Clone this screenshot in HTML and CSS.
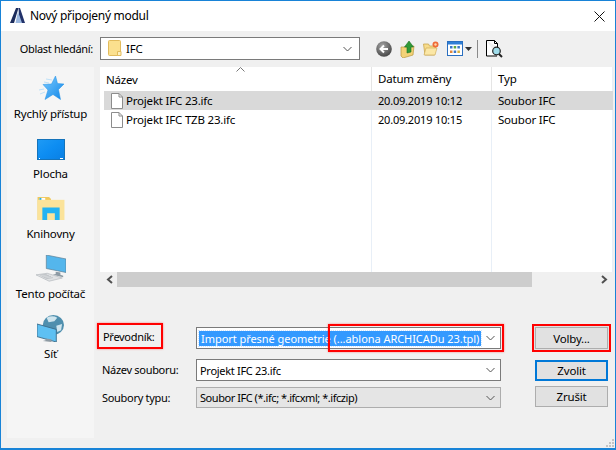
FILE: index.html
```html
<!DOCTYPE html>
<html lang="cs">
<head>
<meta charset="utf-8">
<title>Nový připojený modul</title>
<link rel="stylesheet" href="styles.css">
</head>
<body>
<div class="window">
  <header class="titlebar">
    <svg class="app-logo" width="15" height="15" viewBox="0 0 15 15"><path d="M0 15 6 0h2.500L4 15z" fill="#1c2c5c"/><path d="M8.500 0H10l5 15H9.500z" fill="#22326a"/><path d="M8 3.500 12 15H5.500z" fill="#9db9e0"/></svg>
    <span class="title-text">Nový připojený modul</span>
    <svg class="close" width="11" height="11" viewBox="0 0 11 11"><path d="M.5.500l10 10M10.500.500l-10 10" stroke="#111" stroke-width="1" fill="none"/></svg>
  </header>

  <div class="lookin">
    <label class="lookin-label">Oblast hledání:</label>
    <div class="combo lookin-combo">
      <svg class="folder" width="14" height="17" viewBox="0 0 14 17"><path d="M.5 1.500Q.5.500 1.500.500h10q1 0 1 1v14h-11q-1 0-1-1z" fill="#fbe08e" stroke="#e2bb5c"/><path d="M9.500 11.500h3.500v4h-3.500z" fill="#fdf0bf" stroke="#e2bb5c"/></svg>
      <span class="combo-text">IFC</span>
      <svg class="chev" width="9" height="6" viewBox="0 0 9 6"><path d="M.5 1l4 4 4-4" fill="none" stroke="#555"/></svg>
    </div>
    <div class="tools">
      <svg width="16" height="16" viewBox="0 0 16 16"><defs><radialGradient id="bk" cx=".4" cy=".3" r=".8"><stop offset="0" stop-color="#a5a5a5"/><stop offset="1" stop-color="#3c3c3c"/></radialGradient></defs><circle cx="8" cy="8" r="7.800" fill="url(#bk)"/><path d="M12 8H5M8 4.500 4.500 8 8 11.500" fill="none" stroke="#fff" stroke-width="2"/></svg>
      <svg class="tool-up" width="16" height="18" viewBox="0 0 16 18"><path d="M1 7h5l8-1-1 9-10 3-2-2z" fill="#f3d277" stroke="#b9963f" stroke-width=".7"/><path d="M7 13V7H4.500L9 1l4.500 6H11v5z" fill="#2f9a36" stroke="#1c6e24" stroke-width=".6"/></svg>
      <svg class="tool-new" width="16" height="15" viewBox="0 0 16 15"><path d="M.5 3h5l1 2h6l-1 9H2z" fill="#f7dc8c" stroke="#c9a64f" stroke-width=".8"/><path d="M1 14 3 7h11l-2 7z" fill="#fbe7a6" stroke="#c9a64f" stroke-width=".6"/><circle cx="12.500" cy="3.500" r="3" fill="#ef6a38"/><circle cx="12.500" cy="3.500" r="1.200" fill="#ffd7a8"/></svg>
      <svg class="tool-view" width="25" height="15" viewBox="0 0 25 15"><rect x=".5" y=".5" width="15" height="14" fill="#fff" stroke="#2a6fc0"/><rect x="1" y="1" width="14" height="2.500" fill="#2f7fd6"/><path d="M3 5h2.500v2.500H3z" fill="#3b78c9"/><path d="M6.700 5h2.500v2.500H6.700z" fill="#5aa641"/><path d="M10.400 5h2.500v2.500h-2.500z" fill="#3b78c9"/><path d="M3 9.500h2.500V12H3z" fill="#e2863a"/><path d="M6.700 9.500h2.500V12H6.700z" fill="#3b78c9"/><path d="M10.400 9.500h2.500V12h-2.500z" fill="#d9b13c"/><path d="M18 6h7l-3.500 4z" fill="#333"/></svg>
      <span class="tool-sep"></span>
      <svg width="17" height="18" viewBox="0 0 17 18"><path d="M.5.500h8l3 3V7M11 16H.500V.500" fill="#fff" stroke="#000"/><path d="M8.500.500v3h3" fill="none" stroke="#000"/><circle cx="10.500" cy="11" r="3.800" fill="#9fdcea" stroke="#222" stroke-width="1.200"/><path d="M13 14l3 3" stroke="#222" stroke-width="2"/></svg>
    </div>
  </div>

  <div class="main">
    <nav class="places">
      <div class="place place-star">
        <svg width="26" height="26" viewBox="0 0 26 26"><defs><linearGradient id="st" x1="0" y1="0" x2="1" y2="1"><stop offset="0" stop-color="#7ccbff"/><stop offset="1" stop-color="#0f86e8"/></linearGradient></defs><path d="M8 3l6 1M6 6l5 1M1 14l5-1M2 18l5-2" stroke="#bfe1f8" stroke-width="1" fill="none"/><path d="M17.500 0l2 7.500L26 8 20.500 13.500l2 10-7.500-5L7 23.500l3-9.500-5-5.500 8.500-.5z" fill="url(#st)" stroke="#1c8fe6" stroke-width=".5"/></svg>
        <span>Rychlý přístup</span>
      </div>
      <div class="place">
        <svg width="28" height="21" viewBox="0 0 28 21"><defs><linearGradient id="dk" x1="0" y1="0" x2="1" y2="1"><stop offset="0" stop-color="#1f9bf5"/><stop offset=".5" stop-color="#0d8df2"/><stop offset="1" stop-color="#0a7fe3"/></linearGradient></defs><rect x=".5" y=".5" width="27" height="20" fill="url(#dk)" stroke="#1573ba"/><path d="M2 19.500h1M23 19.500h3" stroke="#fff"/></svg>
        <span>Plocha</span>
      </div>
      <div class="place">
        <svg width="28" height="24" viewBox="0 0 28 25"><path d="M0 1h12l2 2v22H0z" fill="#f0c85c"/><path d="M0 4h28v21H0z" fill="#fbe39a"/><path d="M2 2h6v2H2z" fill="#fff"/><path d="M2 2h2v2H2z" fill="#2ab0e0"/><path d="M5 25V12h18v13h-5v-7h-8v7z" fill="#22b3f2"/></svg>
        <span>Knihovny</span>
      </div>
      <div class="place place-tight">
        <svg width="30" height="27" viewBox="0 0 32 34" preserveAspectRatio="none"><path d="M11 0l21 5v17l-21-5z" fill="#54b6ec" stroke="#5b7e94" stroke-width=".8"/><path d="M21 21v3l-3 1 11 3v-2l-3-1v-3z" fill="#8d9aa3"/><path d="M0 25l12-2 16 6-14 4z" fill="#e0e2e4" stroke="#aeb3b7" stroke-width=".7"/><path d="M4 25.500l8-1.300M6 27l8-1.500M8 28.500l8-1.500M10 30l8-1.500" stroke="#b3b8bc" stroke-width=".8"/></svg>
        <span>Tento počítač</span>
      </div>
      <div class="place place-tight">
        <svg width="27" height="27" viewBox="0 0 28 30" preserveAspectRatio="none"><circle cx="17" cy="11" r="11" fill="#4f8fae"/><path d="M10 3q6-3 11 0l-3 4-6 1zM20 12l6-2-1 7-4 2z" fill="#cfe5ee"/><path d="M0 10l20 6v14L0 24z" fill="#5ec0f2" stroke="#3e6f8c"/><path d="M9 26v2l-3 1 9 1v-3z" fill="#8d9aa3"/></svg>
        <span>Síť</span>
      </div>
    </nav>

    <div class="content">
      <section class="files">
        <div class="row header">
          <div class="col-name">Název<svg class="sort" width="9" height="5" viewBox="0 0 9 5"><path d="M.5 4.500l4-4 4 4" fill="none" stroke="#777"/></svg></div>
          <div class="col-date">Datum změny</div>
          <div class="col-type">Typ</div>
        </div>
        <div class="row selected">
          <div class="col-name"><svg class="doc" width="12" height="16" viewBox="0 0 12 16"><path d="M.5.500h7.500l3.500 3.500v11.500H.500z" fill="#fff" stroke="#8c8c8c"/><path d="M8 .500V4h3.500" fill="none" stroke="#8c8c8c"/></svg>Projekt IFC 23.ifc</div>
          <div class="col-date">20.09.2019 10:12</div>
          <div class="col-type">Soubor IFC</div>
        </div>
        <div class="row">
          <div class="col-name"><svg class="doc" width="12" height="16" viewBox="0 0 12 16"><path d="M.5.500h7.500l3.500 3.500v11.500H.500z" fill="#fff" stroke="#8c8c8c"/><path d="M8 .500V4h3.500" fill="none" stroke="#8c8c8c"/></svg>Projekt IFC TZB 23.ifc</div>
          <div class="col-date">20.09.2019 10:15</div>
          <div class="col-type">Soubor IFC</div>
        </div>
      </section>

      <div class="hscroll">
        <svg width="7" height="9" viewBox="0 0 7 9"><path d="M6 1 2 4.500 6 8" fill="none" stroke="#505050" stroke-width="2"/></svg>
        <div class="thumb"></div>
        <svg width="7" height="9" viewBox="0 0 7 9"><path d="M1 1l4 3.500L1 8" fill="none" stroke="#505050" stroke-width="2"/></svg>
      </div>

      <form class="form">
        <label class="lbl lbl-red">Převodník:</label>
        <div class="combo combo-conv">
          <span class="sel-text">Import přesné geometrie (...ablona ARCHICADu 23.tpl)</span>
          <svg class="chev" width="9" height="6" viewBox="0 0 9 6"><path d="M.5 1l4 4 4-4" fill="none" stroke="#555"/></svg>
          <span class="red-frame"></span>
        </div>
        <div class="btn-cell"><button type="button" class="btn btn-red">Volby...</button></div>

        <label class="lbl">Název souboru:</label>
        <div class="combo combo-name">
          <span class="combo-text">Projekt IFC 23.ifc</span>
          <svg class="chev" width="9" height="6" viewBox="0 0 9 6"><path d="M.5 1l4 4 4-4" fill="none" stroke="#555"/></svg>
        </div>
        <div class="btn-cell"><button type="button" class="btn btn-default">Zvolit</button></div>

        <label class="lbl">Soubory typu:</label>
        <div class="combo combo-type">
          <span class="combo-text">Soubor IFC (*.ifc; *.ifcxml; *.ifczip)</span>
          <svg class="chev" width="9" height="6" viewBox="0 0 9 6"><path d="M.5 1l4 4 4-4" fill="none" stroke="#555"/></svg>
        </div>
        <div class="btn-cell"><button type="button" class="btn btn-cancel">Zrušit</button></div>
      </form>
    </div>
  </div>

  <svg class="grip" width="9" height="9" viewBox="0 0 9 9"><path d="M7 0h2v2H7zM4 3h2v2H4zM7 3h2v2H7zM1 6h2v2H1zM4 6h2v2H4zM7 6h2v2H7z" fill="#c4c4c4"/></svg>
</div>
</body>
</html>
```
FILE: styles.css
```css
* { box-sizing: border-box; }
html, body { margin: 0; padding: 0; }
body {
  width: 616px;
  height: 450px;
  overflow: hidden;
  font-family: "Noto Sans", "Open Sans", sans-serif;
  font-size: 11.5px;
  letter-spacing: -.2px;
  color: #000;
}
svg { display: block; flex: none; }

.window {
  position: relative;
  width: 616px;
  height: 450px;
  background: #f0f0f0;
  border: 1px solid #1883d7;
  border-bottom-width: 2px;
}

.titlebar {
  height: 30px;
  background: #fff;
  display: flex;
  align-items: center;
  padding: 0 10px 0 9px;
}
.app-logo { margin-right: 5px; margin-top: -1px; }
.title-text { font-size: 12px; letter-spacing: -.3px; flex: 1; margin-top: -1px; }
.close { margin-top: 0; }

.lookin {
  display: flex;
  align-items: center;
  height: 36px;
  padding: 6px 0 7px 0;
}
.lookin-label {
  width: 99px;
  padding-right: 7px;
  text-align: right;
  font-size: 11px;
  letter-spacing: -.3px;
}
.combo {
  display: flex;
  align-items: center;
  background: #fff;
  border: 1px solid #7a7a7a;
  position: relative;
}
.combo-text { flex: 1; white-space: nowrap; padding-left: 3px; }
.chev { margin-right: 7px; }
.form .chev { margin-right: 5px; }
.lookin-combo { width: 260px; height: 23px; padding-left: 7px; }
.lookin-combo .combo-text { padding-left: 4px; }
.tools {
  display: flex;
  align-items: center;
  margin-left: 16px;
}
.tool-up { margin-left: 8px; }
.tool-new { margin-left: 7px; }
.tool-view { margin-left: 8px; }
.tool-sep { width: 1px; height: 18px; background: #8a8a8a; margin: 0 8px 0 5px; }

.main {
  display: flex;
  padding-left: 6px;
  height: 381px;
}
.places {
  width: 87px;
  height: 371px;
  background: #f5f5f5;
  display: flex;
  flex-direction: column;
}
.place {
  height: 60px;
  display: flex;
  flex-direction: column;
  align-items: center;
  justify-content: flex-end;
  gap: 6px;
  line-height: 16px;
  white-space: nowrap;
}
.place-star { height: 55px; gap: 4px; }
.place-tight { gap: 4px; }

.content {
  width: 515px;
  margin-left: 6px;
}
.files {
  width: 513px;
  height: 205px;
  background-color: #fff;
  background-image:
    linear-gradient(#e8eff7, #e8eff7),
    linear-gradient(#e8eff7, #e8eff7),
    linear-gradient(#e8eff7, #e8eff7);
  background-size: 1px 100%;
  background-repeat: no-repeat;
  background-position: 271px 0, 391px 0, 512px 0;
  padding-left: 4px;
  display: flex;
  flex-direction: column;
}
.row {
  display: flex;
  height: 19px;
  align-items: center;
  white-space: nowrap;
}
.header { height: 24px; position: relative; }
.selected { background: #d9d9d9; }
.col-name { width: 267px; display: flex; align-items: center; padding-left: 7px; }
.header .col-name { padding-left: 2px; }
.col-date { width: 120px; padding-left: 7px; font-size: 11px; }
.col-type { width: 122px; padding-left: 7px; }
.header .col-date, .header .col-type { height: 24px; line-height: 24px; border-left: 1px solid #e5e5e5; padding-left: 6px; font-size: 11.5px; }
.doc { margin-right: 3px; }
.sort { position: absolute; left: 132px; top: 0; }

.hscroll {
  width: 513px;
  height: 15px;
  display: flex;
  align-items: center;
  padding: 0 5px 0 6px;
}
.thumb {
  width: 415px;
  height: 15px;
  background: #cdcdcd;
  margin: 0 69px 0 4px;
}

.form {
  display: grid;
  grid-template-columns: 96px 305px 107px;
  grid-template-rows: 32px 28px 21px;
  padding-top: 40px;
  font-size: 11px;
  letter-spacing: -.3px;
}
.lbl { display: block; line-height: 22px; white-space: nowrap; padding-left: 2px; }
.lbl-red {
  margin: -4px 0 0 -3px;
  width: 66px;
  height: 26px;
  border: 2px solid #f00;
  box-shadow: 0 0 2px rgba(255,0,0,.45);
  padding-left: 4px;
  line-height: 23px;
}
.combo-conv, .combo-name { height: 22px; }
.combo-type { height: 21px; background: #e5e5e5; border-color: #adadad; letter-spacing: -.45px; }
.combo-conv { padding-left: 2px; }
.sel-text {
  flex: 1;
  white-space: nowrap;
  margin-right: 5px;
  height: 15px;
  line-height: 15px;
  background: #3399ff;
  color: #fff;
  outline: 1px dotted #cfe5ff;
  padding-left: 2px;
  letter-spacing: -.05px;
}
.red-frame {
  position: absolute;
  left: 131px;
  right: -4px;
  top: -4px;
  bottom: -4px;
  border: 2px solid #f00;
  box-shadow: 0 0 2px rgba(255,0,0,.45);
}
.btn-cell { padding-left: 34px; }
.btn {
  display: block;
  width: 73px;
  height: 21px;
  padding: 0;
  background: #e1e1e1;
  border: 1px solid #adadad;
  font: inherit;
  font-size: 11.5px;
  letter-spacing: -.2px;
  color: #000;
}
.btn-red {
  height: 22px;
  outline: 2px solid #f00;
  outline-offset: 1px;
  box-shadow: 0 0 0 1px #e1e1e1;
}
.btn-default { margin-top: 1px; border: 2px solid #0078d7; }
.btn-cancel { margin-top: -1px; }

.grip { position: absolute; right: 1px; bottom: 0; }
```
